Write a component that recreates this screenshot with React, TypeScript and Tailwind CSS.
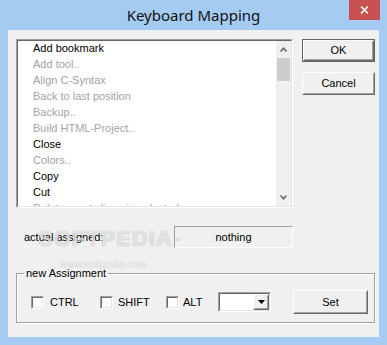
import React from "react";

const items: [string, boolean][] = [
  ["Add bookmark", true],
  ["Add tool..", false],
  ["Align C-Syntax", false],
  ["Back to last position", false],
  ["Backup..", false],
  ["Build HTML-Project..", false],
  ["Close", true],
  ["Colors..", false],
  ["Copy", true],
  ["Cut", true],
  ["Delete empty lines in selected range", false],
];

function Raised({ children, className }: { children: React.ReactNode; className?: string }) {
  return (
    <div className={"border border-t-white border-l-white border-r-[#696969] border-b-[#696969] " + (className ?? "")}>
      <div className="w-full h-full border border-t-[#f0f0f0] border-l-[#f0f0f0] border-r-[#a0a0a0] border-b-[#a0a0a0] bg-[#f0f0f0] flex items-center justify-center">
        {children}
      </div>
    </div>
  );
}

function Check({ label, w, gap }: { label: string; w: string; gap: string }) {
  return (
    <div className={"flex items-center " + w}>
      <div className="w-[13px] h-[13px] border border-t-[#a0a0a0] border-l-[#a0a0a0] border-r-white border-b-white">
        <div className="w-full h-full border border-t-[#696969] border-l-[#696969] border-r-[#e3e3e3] border-b-[#e3e3e3] bg-white" />
      </div>
      <span className={"text-[11px] text-black " + gap}>{label}</span>
    </div>
  );
}

export default function App() {
  return (
    <div className="w-[387px] h-[345px] bg-[#a6cbf3] flex flex-col overflow-hidden font-['Liberation_Sans',Arial,sans-serif]">
      {/* title bar */}
      <div className="h-[30px] grid grid-cols-[1fr_auto_1fr] items-start">
        <div />
        <div className="mt-[5px] text-[15px] leading-[20px] text-[#111] font-['Noto_Sans',sans-serif]">Keyboard Mapping</div>
        <div className="flex justify-end pr-[7px]">
          <div className="w-[31px] h-[20px] bg-[#c75050] flex items-center justify-center">
            <svg width="9" height="8" viewBox="0 0 9 8">
              <path d="M1 0.5 L8 7.5 M8 0.5 L1 7.5" stroke="white" strokeWidth="1.6" />
            </svg>
          </div>
        </div>
      </div>

      {/* client */}
      <div className="mx-[8px] h-[307px] bg-[#f0f0f0] flex flex-col relative">
        <div className="flex items-start mt-[9px] ml-[8px]">
          {/* listbox */}
          <div className="w-[277px] h-[169px] border border-t-[#a0a0a0] border-l-[#a0a0a0] border-r-white border-b-white">
            <div className="w-full h-full border border-t-[#696969] border-l-[#696969] border-r-[#e3e3e3] border-b-[#e3e3e3] bg-white flex">
              <div className="flex-1 overflow-hidden">
                <div className="-mt-[1px] pl-[15px]">
                  {items.map(([t, en]) => (
                    <div key={t} className={"h-[16px] leading-[16px] text-[11px] whitespace-nowrap " + (en ? "text-black" : "text-[#a3a3a3]")}>
                      {t}
                    </div>
                  ))}
                </div>
              </div>
              {/* scrollbar */}
              <div className="w-[15px] bg-[#f0f0f0] flex flex-col items-center">
                <div className="h-[17px] w-full flex items-center justify-center">
                  <svg width="7" height="5" viewBox="0 0 7 5">
                    <path d="M0.5 4.5 L3.5 1.2 L6.5 4.5" stroke="#606060" strokeWidth="1.5" fill="none" />
                  </svg>
                </div>
                <div className="w-[13px] h-[23px] bg-[#cdcdcd]" />
                <div className="flex-1" />
                <div className="h-[17px] w-full flex items-center justify-center">
                  <svg width="7" height="5" viewBox="0 0 7 5">
                    <path d="M0.5 0.5 L3.5 3.8 L6.5 0.5" stroke="#606060" strokeWidth="1.5" fill="none" />
                  </svg>
                </div>
              </div>
            </div>
          </div>

          {/* buttons */}
          <div className="ml-[9px] flex flex-col">
            <div className="w-[73px] h-[23px] border border-[#646464]">
              <Raised className="w-full h-full">
                <span className="text-[11px] text-black">OK</span>
              </Raised>
            </div>
            <Raised className="w-[73px] h-[23px] mt-[10px]">
              <span className="text-[11px] text-black">Cancel</span>
            </Raised>
          </div>
        </div>

        {/* actual assigned */}
        <div className="flex items-center mt-[18px] ml-[16px]">
          <div className="w-[150px] text-[11px] text-black">actual assigned:</div>
          <div className="w-[119px] h-[22px] border border-t-[#a0a0a0] border-l-[#a0a0a0] border-r-white border-b-white flex items-center justify-center text-[11px] text-black">
            nothing
          </div>
        </div>

        {/* group box */}
        <fieldset className="mt-[19px] ml-[8px] w-[359px] h-[56px] border border-[#a0a0a0] shadow-[inset_1px_1px_0_#ffffff,1px_1px_0_#ffffff] rounded-none">
          <legend className="ml-[7px] px-[2px] text-[11px] leading-[13px] text-black">new Assignment</legend>
          <div className="flex items-center mt-[10px] pl-[14px] h-[24px]">
            <Check label="CTRL" w="w-[69px]" gap="ml-[6px]" />
            <Check label="SHIFT" w="w-[66px]" gap="ml-[5px]" />
            <Check label="ALT" w="w-[52px]" gap="ml-[4px]" />
            {/* combo */}
            <div className="w-[53px] h-[20px] border border-t-[#a0a0a0] border-l-[#a0a0a0] border-r-white border-b-white">
              <div className="w-full h-full border border-t-[#696969] border-l-[#696969] border-r-[#e3e3e3] border-b-[#e3e3e3] bg-white flex justify-end">
                <Raised className="w-[16px] h-full">
                  <svg width="7" height="4" viewBox="0 0 7 4">
                    <path d="M0 0 L7 0 L3.5 4 Z" fill="black" />
                  </svg>
                </Raised>
              </div>
            </div>
            <Raised className="w-[75px] h-[24px] ml-[22px]">
              <span className="text-[11px] text-black">Set</span>
            </Raised>
          </div>
        </fieldset>

        {/* watermark */}
        <div className="absolute left-[30px] top-[192px] text-[22px] font-bold tracking-[1px] text-white/70 [text-shadow:0_0_1px_rgba(0,0,0,0.35)] pointer-events-none">
          SOFTPEDIA<sup className="text-[7px] font-normal">™</sup>
        </div>
        <div className="absolute left-[52px] top-[227px] text-[10px] text-white/80 [text-shadow:0_0_1px_rgba(0,0,0,0.3)] pointer-events-none">
          www.softpedia.com
        </div>
      </div>
    </div>
  );
}
